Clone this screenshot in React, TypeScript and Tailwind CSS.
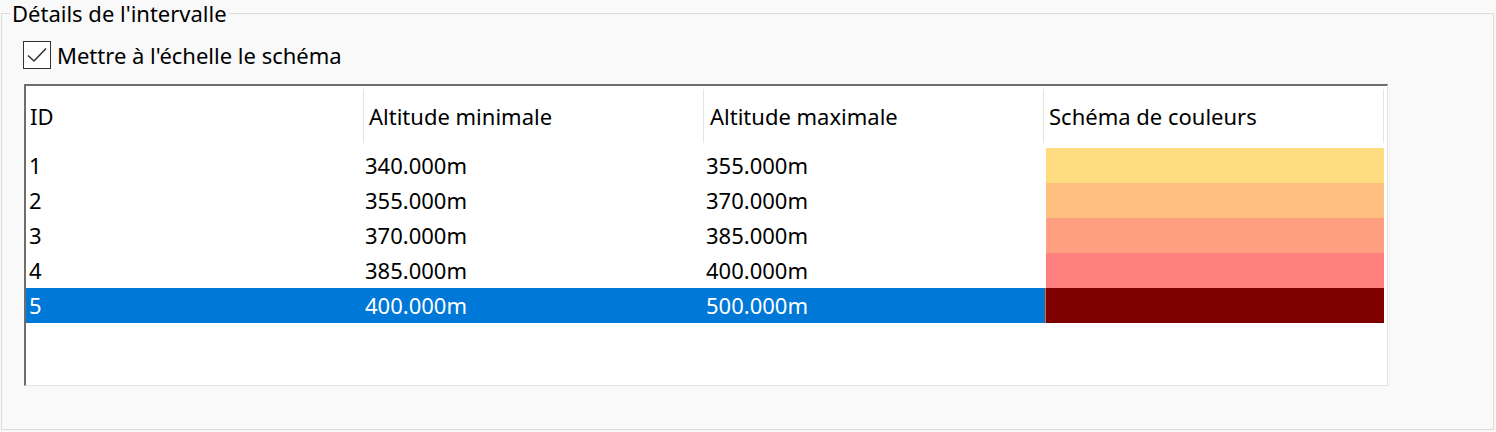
import React from "react";

type Row = { id: number; min: string; max: string; color: string };

const rows: Row[] = [
  { id: 1, min: "340.000m", max: "355.000m", color: "#ffdc7f" },
  { id: 2, min: "355.000m", max: "370.000m", color: "#ffbf7f" },
  { id: 3, min: "370.000m", max: "385.000m", color: "#ff9f7f" },
  { id: 4, min: "385.000m", max: "400.000m", color: "#ff7f7f" },
  { id: 5, min: "400.000m", max: "500.000m", color: "#800000" },
];

const SELECTED = 5;

export default function App() {
  return (
    <div
      className="w-[1496px] h-[432px] bg-[#f9f9f9] text-black overflow-hidden pt-[2px]"
      style={{ fontFamily: '"Noto Sans", "Open Sans", sans-serif' }}
    >
      <fieldset className="-mt-[4px] ml-[1px] mr-[2px] h-[432px] border border-[#dcdcdc] pl-[8px]">
        <legend className="px-[2px] text-[22px] leading-[30px]">Détails de l'intervalle</legend>

        {/* Checkbox */}
        <label className="mt-[13px] ml-[13px] flex items-center gap-[6px] text-[22px] leading-[28px]">
          <span className="w-[28px] h-[28px] border border-[#333] bg-white flex items-center justify-center">
            <svg width="22" height="22" viewBox="0 0 22 22" fill="none">
              <polyline points="2,11.5 8,17 20,4.5" stroke="#333" strokeWidth="1.6" />
            </svg>
          </span>
          Mettre à l'échelle le schéma
        </label>

        {/* Table */}
        <div className="mt-[15px] ml-[14px] w-[1364px] h-[302px] bg-white border-t-2 border-l-2 border-t-[#6e6e6e] border-l-[#6e6e6e] border-r border-b border-r-[#e3e3e3] border-b-[#e3e3e3] text-[22px]">
          <div className="grid grid-cols-[337px_340px_340px_341px] h-[57px] pt-[3px]">
            <div className="flex items-center pl-[4px]">ID</div>
            <div className="flex items-center pl-[5px] border-l border-[#e5e5e5]">Altitude minimale</div>
            <div className="flex items-center pl-[6px] border-l border-[#e5e5e5]">Altitude maximale</div>
            <div className="flex items-center pl-[5px] border-l border-r border-[#e5e5e5]">Schéma de couleurs</div>
          </div>
          <div className="mt-[5px]">
            {rows.map((r) => {
              const sel = r.id === SELECTED;
              return (
                <div key={r.id} className="flex h-[35px]">
                  <div className={`w-[1019px] grid grid-cols-[337px_340px_342px] ${sel ? "bg-[#0078d7] text-white" : ""}`}>
                    <div className="flex items-center pl-[3px]">{r.id}</div>
                    <div className="flex items-center pl-[2px]">{r.min}</div>
                    <div className="flex items-center pl-[3px]">{r.max}</div>
                  </div>
                  <div
                    className={`w-[339px] ${sel ? "border-l border-[#e07020]" : "border-l border-white"}`}
                    style={{ backgroundColor: r.color }}
                  />
                </div>
              );
            })}
          </div>
        </div>
      </fieldset>
    </div>
  );
}
